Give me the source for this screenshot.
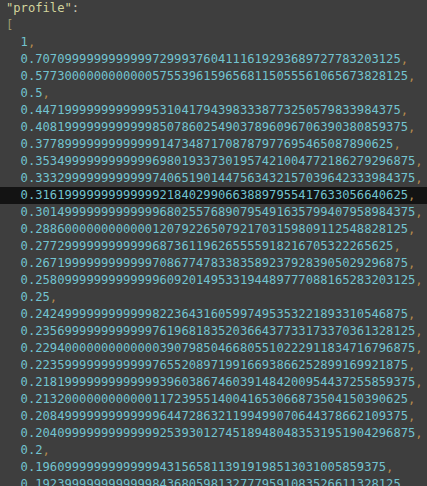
import React from 'react';
import clsx from 'clsx';

// head + a run of repeated digits + tail, as the viewer printed them
const num = (head: string, digit: string, count: number, tail: string) =>
  head + digit.repeat(count) + tail;

const profile = [
  '1',
  num('0.7070', '9', 12, '7299937604111619293689727783203125'),
  num('0.5773', '0', 12, '57553961596568115055561065673828125'),
  '0.5',
  num('0.4471', '9', 12, '5310417943983338773250579833984375'),
  num('0.4081', '9', 12, '85078602549037896096706390380859375'),
  num('0.3778', '9', 13, '14734871708787977695465087890625'),
  num('0.3534', '9', 12, '698019337301957421004772186279296875'),
  num('0.3332', '9', 12, '740651901447563432157039642333984375'),
  num('0.3161', '9', 13, '2184029906638897955417633056640625'),
  num('0.3014', '9', 13, '68025576890795491635799407958984375'),
  num('0.2886', '0', 12, '12079226507921703159809112548828125'),
  num('0.2772', '9', 12, '687361196265555918216705322265625'),
  num('0.2671', '9', 12, '70867747833835892379283905029296875'),
  num('0.2580', '9', 13, '60920149533194489777088165283203125'),
  '0.25',
  num('0.2424', '9', 12, '82236431605997495353221893310546875'),
  num('0.2356', '9', 12, '761968183520366437733173370361328125'),
  num('0.2294', '0', 13, '39079850466805510222911834716796875'),
  num('0.2235', '9', 12, '76552089719916693866252899169921875'),
  num('0.2181', '9', 13, '39603867460391484200954437255859375'),
  num('0.2132', '0', 12, '11723955140041653066873504150390625'),
  num('0.2084', '9', 13, '6447286321199499070644378662109375'),
  num('0.2040', '9', 13, '25393012745189480483531951904296875'),
  '0.2',
  num('0.1960', '9', 13, '4315658113919198513031005859375'),
  num('0.1923', '9', 12, '8436805981327779591083526611328125'),
];

const ACTIVE = 9;

export default function App() {
  return (
    <div
      className="h-[486px] w-full overflow-hidden bg-[#3e3e3e] text-[12.15px] leading-[17px] whitespace-pre"
      style={{ fontFamily: '"DejaVu Sans Mono", "Liberation Mono", monospace' }}
    >
      <div className="h-[17px] pl-[6px]">
        <span className="text-[#d3d49c]">"profile"</span>
        <span className="text-[#c9c9b8]">:</span>
      </div>
      <div className="h-[17px] pl-[6px] text-[#9c9b6c]">[</div>
      {profile.map((v, i) => (
        <div
          key={i}
          className={clsx('h-[17px] pl-[calc(6px+2ch)]', i === ACTIVE && 'bg-[#131313]')}
        >
          <span className="text-[#72c3d0]">{v}</span>
          <span className="text-[#b58a4c]">,</span>
        </div>
      ))}
    </div>
  );
}
